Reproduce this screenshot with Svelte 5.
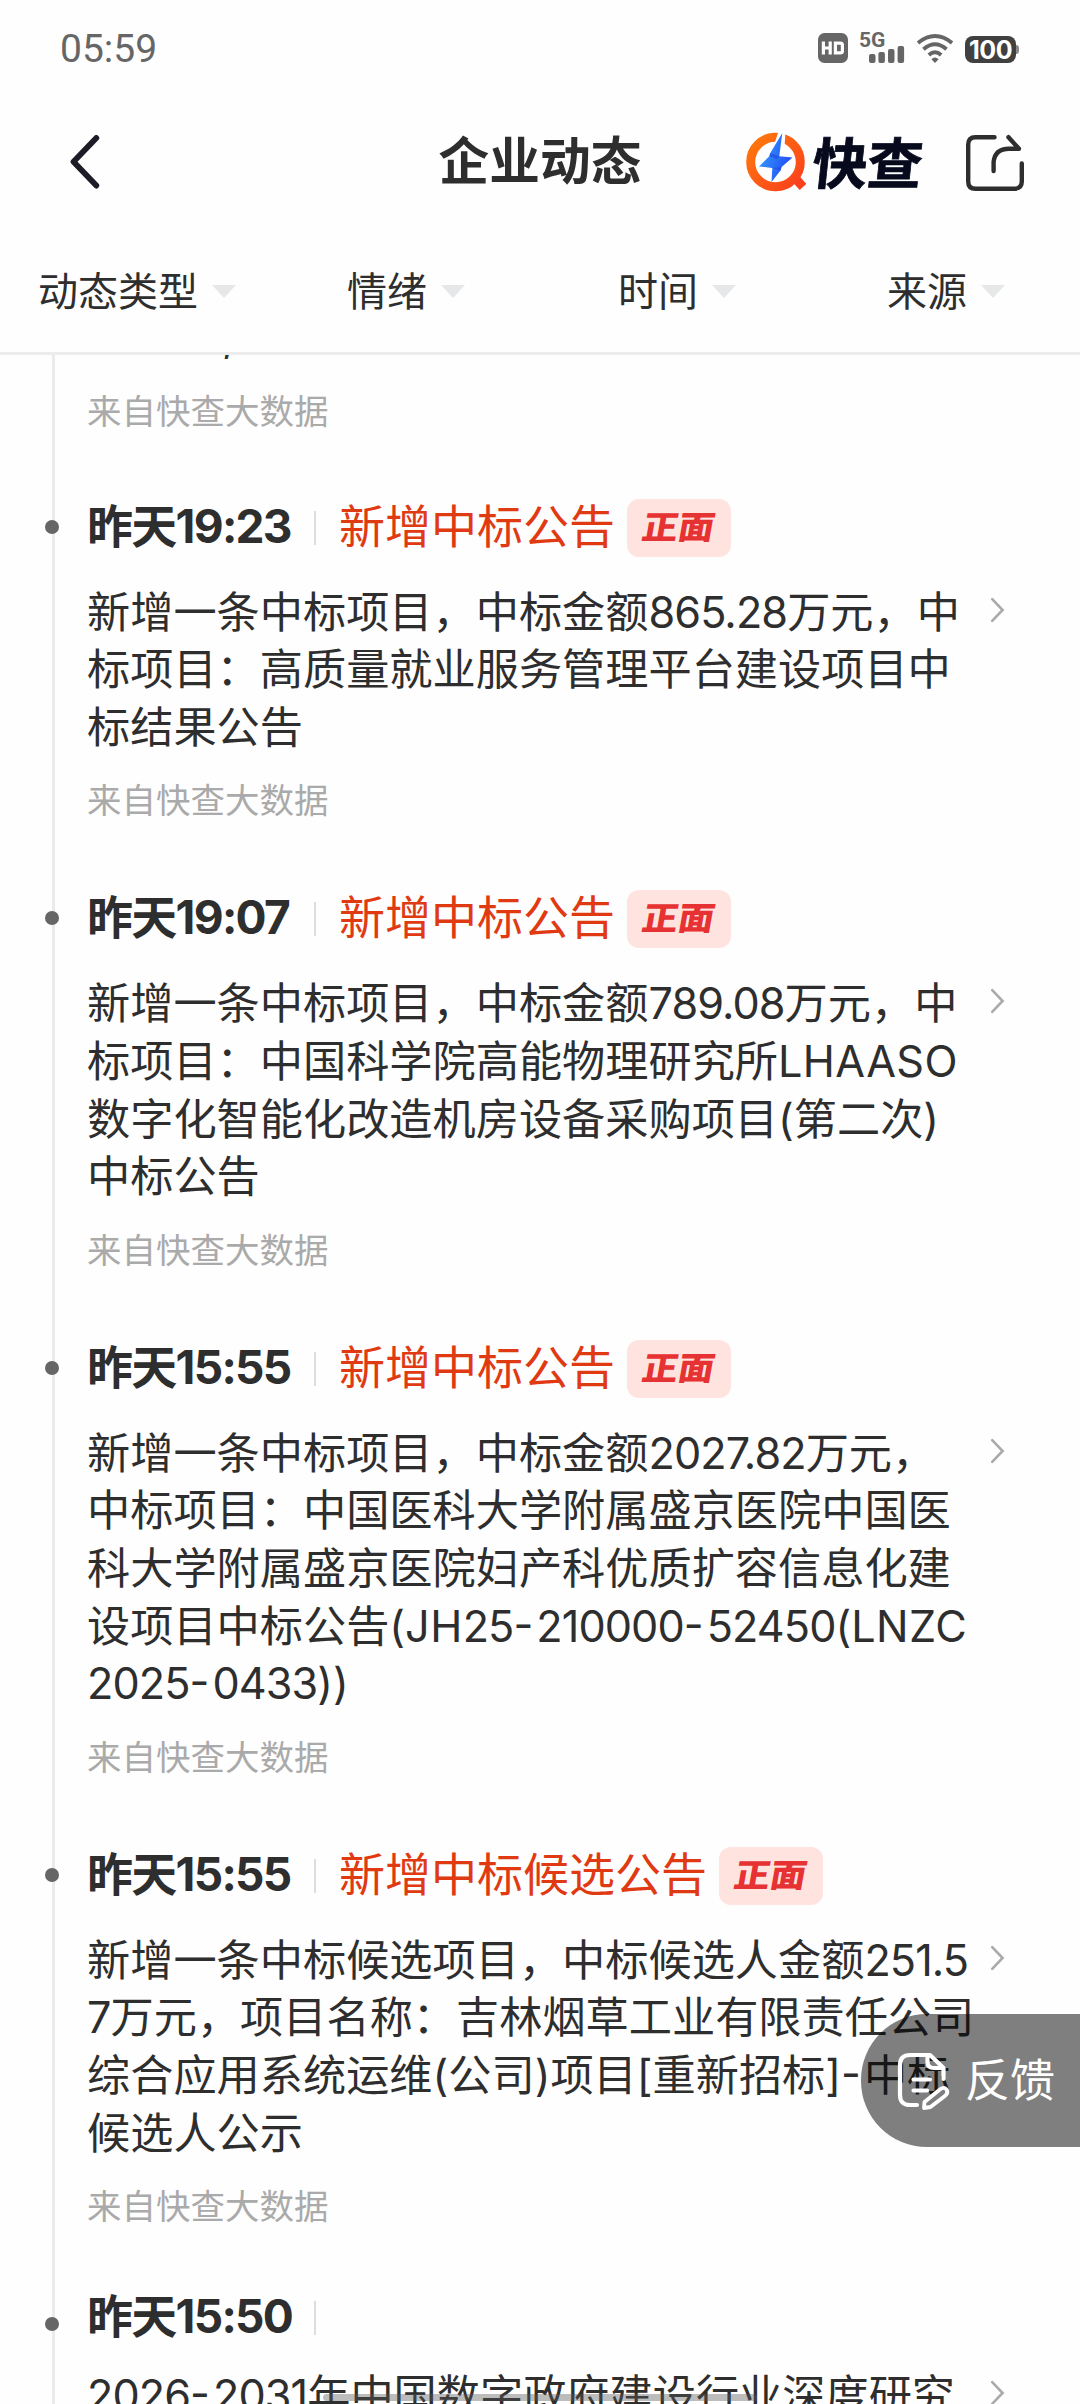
<script>
  const filters = ['动态类型', '情绪', '时间', '来源'];
  const source = '来自快查大数据';

  const items = [
    {
      time: '昨天19:23',
      type: '新增中标公告',
      badge: '正面',
      lines: ['新增一条中标项目，中标金额865.28万元，中', '标项目：高质量就业服务管理平台建设项目中', '标结果公告']
    },
    {
      time: '昨天19:07',
      type: '新增中标公告',
      badge: '正面',
      lines: [
        '新增一条中标项目，中标金额789.08万元，中',
        '标项目：中国科学院高能物理研究所LHAASO',
        '数字化智能化改造机房设备采购项目(第二次)',
        '中标公告'
      ]
    },
    {
      time: '昨天15:55',
      type: '新增中标公告',
      badge: '正面',
      lines: [
        '新增一条中标项目，中标金额2027.82万元，',
        '中标项目：中国医科大学附属盛京医院中国医',
        '科大学附属盛京医院妇产科优质扩容信息化建',
        '设项目中标公告(JH25-210000-52450(LNZC',
        '2025-0433))'
      ]
    },
    {
      time: '昨天15:55',
      type: '新增中标候选公告',
      badge: '正面',
      lines: [
        '新增一条中标候选项目，中标候选人金额251.5',
        '7万元，项目名称：吉林烟草工业有限责任公司',
        '综合应用系统运维(公司)项目[重新招标]-中标',
        '候选人公示'
      ]
    },
    {
      time: '昨天15:50',
      type: '',
      badge: '',
      lines: ['2026-2031年中国数字政府建设行业深度研究']
    }
  ];

  // Splits a line into number, letter, hyphen and plain runs, which are tracked differently.
  const runs = (line) => line.split(/([\d.]+|[A-Z]+|-)/).filter(Boolean);
  const kind = (run) =>
    run === '-' ? 'dash' : /^[\d.]+$/.test(run) ? 'num' : /^[A-Z]+$/.test(run) ? 'caps' : 'txt';
</script>

<div class="screen">
  <div class="status">
    <span class="clock">05:59</span>
    <div class="indicators">
      <svg class="hd" width="30" height="30" viewBox="0 0 30 30">
        <rect width="30" height="30" rx="6.5" fill="#666" />
        <path d="M5.4 8.5V21.5M12.2 8.5V21.5M5.4 15H12.2M17.4 10.1H22.4Q24.4 10.1 24.4 12V18Q24.4 19.9 22.4 19.9H17.4Z" fill="none" stroke="#fff" stroke-width="3.2" />
      </svg>
      <div class="cell">
        <span class="net">5G</span>
        <svg width="36" height="17" viewBox="0 0 36 17">
          <g fill="#666">
            <rect x="0" y="8" width="6.5" height="9" rx="2" />
            <rect x="9.4" y="6" width="6.5" height="11" rx="2" />
            <rect x="19" y="3" width="6.5" height="14" rx="2" />
            <rect x="28.6" y="0" width="6.5" height="17" rx="2" />
          </g>
        </svg>
      </div>
      <svg class="wifi" width="36" height="29" viewBox="0 0 36 29">
        <g fill="none" stroke="#666" stroke-width="3.9">
          <path d="M1 9Q18-4.8 35 9" />
          <path d="M6.5 15.2Q18 5.2 29.5 15.2" />
          <path d="M11.8 21Q18 15.6 24.2 21" />
        </g>
        <path d="M14.4 25.2Q18 21.8 21.6 25.2L18 29Z" fill="#666" />
      </svg>
      <div class="battery"><span>100</span></div>
    </div>
  </div>

  <header>
    <svg class="back" width="30" height="54" viewBox="0 0 30 54">
      <path d="M26.3 3L3.5 26.7L26.3 50.6" fill="none" stroke="#1c1b26" stroke-width="5.8" stroke-linecap="round" stroke-linejoin="round" />
    </svg>
    <h1>企业动态</h1>
    <div class="brand">
      <svg width="60" height="60" viewBox="0 0 60 60">
        <defs>
          <linearGradient id="ring" x1="0" y1="0" x2="1" y2="1">
            <stop offset="0" stop-color="#ff7a0c" />
            <stop offset="1" stop-color="#fa3f1d" />
          </linearGradient>
          <linearGradient id="bolt" x1="0" y1="0" x2="1" y2="0.4">
            <stop offset="0" stop-color="#35a6ff" />
            <stop offset="1" stop-color="#2450f5" />
          </linearGradient>
        </defs>
        <path d="M49 46L57 55" stroke="#fa3f1d" stroke-width="9" />
        <circle cx="29.5" cy="30" r="24.8" fill="none" stroke="url(#ring)" stroke-width="9" />
        <path d="M33-2L24 25L31 29L38.5 16L39.5-2Z" fill="#fefefe" />
        <path d="M36.3 1L24.3 21L23.3 24.3L13 34.5L26.3 36L25.5 50L34.5 38.6L35.6 35L46.5 25.5L33.3 24.2Z" fill="url(#bolt)" />
        <path d="M23.3 24.3L24.3 21L33.3 24.2L31 27ZM26.3 36L35.6 35L34.5 38.6Z" fill="#2046dc" opacity=".6" />
      </svg>
      <span>快查</span>
    </div>
    <svg class="share" width="60" height="58" viewBox="0 0 60 58">
      <g fill="none" stroke="#2e2e2e" stroke-width="4.4" stroke-linecap="round" stroke-linejoin="round">
        <path d="M29.5 3.2H10.5Q3.2 3.2 3.2 10.5V47.5Q3.2 54.8 10.5 54.8H48.5Q56.8 54.8 56.8 47.5V29.5" />
        <path d="M28.6 37V28Q30 14.8 44 14.8H54L43.5 3.2" />
      </g>
    </svg>
  </header>

  <nav>
    {#each filters as f}
      <div class="filter"><span>{f}</span><i></i></div>
    {/each}
  </nav>

  <main>
    <div class="item first">
      <p class="body tail">,</p>
      <p class="source">{source}</p>
    </div>
    {#each items as item}
      <section class="item">
        <div class="dot"></div>
        <div class="head" class:plain={!item.badge}>
          <strong>{item.time}</strong>
          <i class="sep"></i>
          {#if item.type}<span class="type">{item.type}</span>{/if}
          {#if item.badge}<span class="badge"><b>{item.badge}</b></span>{/if}
        </div>
        <div class="row">
          <div class="body">
            {#each item.lines as line}
              <p>{#each runs(line) as run}<span class={kind(run)}>{run}</span>{/each}</p>
            {/each}
          </div>
          <svg class="more" width="16" height="26" viewBox="0 0 16 26">
            <path d="M2.2 2.2L12.6 13L2.2 23.8" fill="none" stroke="#aaa" stroke-width="2.6" stroke-linecap="round" />
          </svg>
        </div>
        <p class="source">{source}</p>
      </section>
    {/each}
  </main>

  <button class="feedback">
    <svg width="54" height="60" viewBox="0 0 54 60">
      <g fill="none" stroke="#fff" stroke-width="4.2" stroke-linecap="round" stroke-linejoin="round">
        <path d="M20 54H13Q3 54 3 44V14Q3 4 13 4H33L46.5 17V28" />
        <path d="M30.5 5V11Q30.5 17 37 17H45" />
        <path d="M16.5 28.5H33M16.5 39.5H30" />
        <path d="M27.5 51L43.5 38Q47 35.5 49.5 38.5Q51.5 41.5 48.5 44.5L33.5 56L27 57Z" stroke-width="3.8" />
      </g>
    </svg>
    <span>反馈</span>
  </button>
  <div class="home"></div>
</div>

<style>
  :global(body) { background: #fefefe; }
  .screen {
    position: relative;
    width: 1080px;
    height: 2404px;
    overflow: hidden;
    display: flex;
    flex-direction: column;
    background: #fefefe;
    color: #2e2e2e;
    font-family: Inter, 'Noto Sans CJK SC', sans-serif;
  }
  p, h1 { margin: 0; }
  .status {
    height: 96px;
    box-sizing: border-box;
    padding: 0 61px 0 60px;
    display: flex;
    align-items: center;
    justify-content: space-between;
  }
  .clock { font: 400 39px/60px Roboto, sans-serif; color: #666; padding-top: 2px; }
  .indicators { display: flex; align-items: center; }
  .cell { display: flex; flex-direction: column; width: 45px; height: 30px; margin: 0 12px; }
  .net { font: 700 21px/15px Roboto, sans-serif; color: #666; height: 13px; margin-left: -1px; }
  .cell svg { margin-left: 9px; flex: none; }
  .battery {
    position: relative;
    width: 51px;
    height: 27px;
    margin: 3px 3px 0 12px;
    border-radius: 8px;
    background: #404040;
    color: #fff;
    text-align: center;
    font: 700 25px/28px Inter, sans-serif;
    letter-spacing: -0.5px;
  }
  .battery::after {
    content: '';
    position: absolute;
    left: 51px;
    top: 9px;
    width: 3px;
    height: 9px;
    border-radius: 0 3px 3px 0;
    background: #8a8a8a;
  }
  header {
    height: 132px;
    display: grid;
    grid-template-columns: 340px 400px 217px 1fr;
    align-items: center;
  }
  .back { margin-left: 70px; }
  h1 { text-align: center; font-size: 50.7px; line-height: 60px; font-weight: 700; }
  .brand { margin-left: 6px; display: flex; align-items: center; gap: 7px; }
  .brand span {
    margin-bottom: 5px;
    font: 700 55px/60px 'Noto Sans CJK SC', sans-serif;
    -webkit-text-stroke: 0.8px #060a1c;
    color: #060a1c;
    transform: skewX(-6deg);
    white-space: nowrap;
  }
  .share { margin: 2px 0 0 8px; }
  nav {
    height: 127px;
    display: grid;
    grid-template-columns: 309px 271px 269px 1fr;
    padding-left: 38px;
    box-sizing: border-box;
    border-bottom: 3px solid #ececec;
  }
  .filter { display: flex; align-items: center; gap: 14px; font-size: 40px; line-height: 60px; padding-top: 3px; }
  .filter i {
    width: 24px;
    height: 13px;
    background: #e6e7e8;
    clip-path: polygon(0 0, 100% 0, 50% 100%);
  }
  main {
    flex: 1;
    min-height: 0;
    overflow: hidden;
    background: linear-gradient(#ebebed, #ebebed) 52px 0 / 3px 100% no-repeat;
  }
  .item { position: relative; padding: 0 74px 66px 87px; }
  .first { padding-bottom: 64px; }
  .dot {
    position: absolute;
    left: 45px;
    top: 21px;
    width: 14px;
    height: 14px;
    border-radius: 50%;
    background: #666;
  }
  .head { height: 58px; display: flex; align-items: center; }
  .head.plain { height: 44px; }
  strong { font-size: 46px; line-height: 55px; padding-bottom: 3px; letter-spacing: -1.7px; width: 227px; white-space: nowrap; }
  .sep { width: 2px; height: 34px; background: #ddd; }
  .type { font-size: 46px; line-height: 55px; padding-bottom: 3px; color: #e03a13; margin-left: 23px; white-space: nowrap; }
  .badge {
    width: 104px;
    height: 58px;
    margin-left: 12px;
    border-radius: 12px;
    background: #ffe3df;
    color: #e63232;
    text-align: center;
  }
  .badge b {
    display: block;
    font: 900 36px/53px 'Noto Sans CJK SC', sans-serif;
    transform: skewX(-10deg) scaleY(0.9);
  }
  .row { display: flex; justify-content: space-between; margin-top: 27px; }
  .body { font-size: 43.2px; line-height: 57.6px; white-space: nowrap; }
  .num { letter-spacing: -0.9px; }
  .caps { letter-spacing: 0.4px; }
  .dash { letter-spacing: 3px; font-feature-settings: 'case'; }
  .tail { padding: 0 0 2px 135px; margin-top: -48px; }
  .more { margin-top: 13px; flex: none; }
  .source { margin-top: 22px; font-size: 34.5px; line-height: 46px; color: #aaa; }
  .feedback {
    position: absolute;
    right: 0;
    top: 2014px;
    width: 219px;
    height: 133px;
    padding: 0 0 0 36px;
    border: 0;
    border-radius: 66px 0 0 66px;
    background: rgba(0, 0, 0, 0.5);
    color: #fff;
    display: flex;
    align-items: center;
    gap: 14px;
    font: 400 45px/60px 'Noto Sans CJK SC', sans-serif;
    white-space: nowrap;
  }
  .feedback span { padding-bottom: 6px; }
  .home {
    position: absolute;
    left: 323px;
    bottom: 3px;
    width: 434px;
    height: 7px;
    border-radius: 4px;
    background: rgba(90, 90, 90, 0.4);
  }
</style>
